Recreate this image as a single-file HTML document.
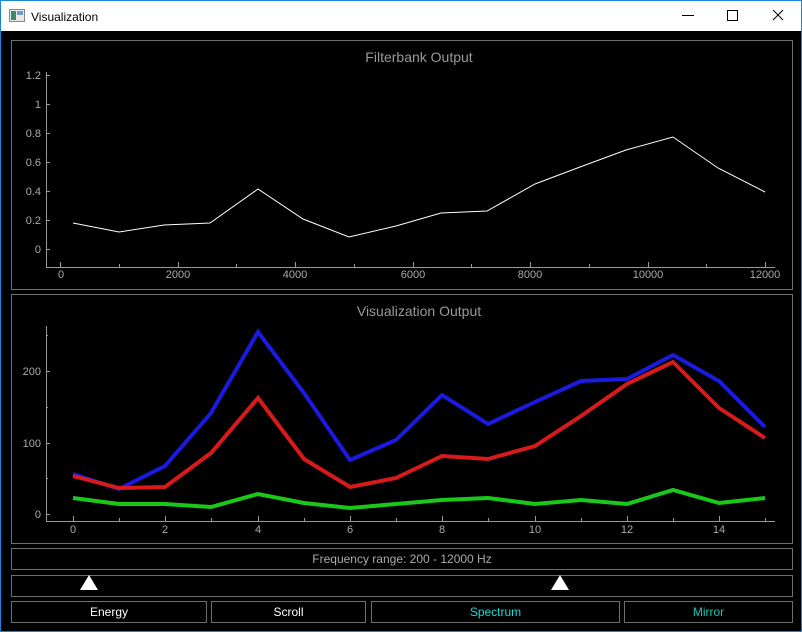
<!DOCTYPE html>
<html><head><style>
body{margin:0;width:802px;height:632px;overflow:hidden;background:#000;font-family:"Liberation Sans",sans-serif;}
#win{position:absolute;left:0;top:0;width:800px;height:630px;border:1px solid #1883d7;background:#000;}
#title{position:absolute;left:0;top:0;width:800px;height:30px;background:#fff;}
.box{position:absolute;border:1px solid #6e6e6e;box-sizing:border-box;color:#aaa;font-size:12px;text-align:center;}
</style></head><body>
<div id="win">
<div id="title">
<svg width="800" height="30" style="position:absolute;left:0;top:0">
<rect x="8.5" y="8.5" width="15" height="12" fill="#e8e8e8" stroke="#888"/>
<rect x="10" y="10" width="5" height="9" fill="#3a8a6a"/>
<rect x="16" y="10" width="6" height="4" fill="#6a9ad0"/>
<text x="30" y="20" font-family="Liberation Sans" font-size="12" fill="#000">Visualization</text>
<line x1="681" y1="14.5" x2="693" y2="14.5" stroke="#000"/>
<rect x="726.5" y="9.5" width="10" height="10" fill="none" stroke="#000"/>
<path d="M772 9 L782 19 M782 9 L772 19" stroke="#000"/>
</svg>
</div>
<div class="box" style="left:10px;top:39px;width:782px;height:250px"></div>
<div class="box" style="left:10px;top:293px;width:782px;height:250px"></div>
<svg width="802" height="632" style="position:absolute;left:-1px;top:-1px" font-family="Liberation Sans" font-size="11" fill="#aaa">
<text x="419" y="62" font-size="14" text-anchor="middle" fill="#999">Filterbank Output</text>
<g stroke="#999" fill="none">
<path d="M46.5 72 V267.5 H775"/>
<path d="M46 75.5h4M46 104.5h4M46 133.5h4M46 162.5h4M46 191.5h4M46 220.5h4M46 249.5h4"/>
<path d="M60.5 267v-5M119.5 267v-3M178.5 267v-5M236.5 267v-3M295.5 267v-5M354.5 267v-3M413.5 267v-5M471.5 267v-3M530.5 267v-5M589.5 267v-3M648.5 267v-5M706.5 267v-3M765.5 267v-5"/>
</g>
<g text-anchor="end"><text x="41" y="79">1.2</text><text x="41" y="108">1</text><text x="41" y="137">0.8</text><text x="41" y="166">0.6</text><text x="41" y="195">0.4</text><text x="41" y="224">0.2</text><text x="41" y="253">0</text></g>
<g text-anchor="middle"><text x="61" y="278">0</text><text x="178" y="278">2000</text><text x="295" y="278">4000</text><text x="413" y="278">6000</text><text x="530" y="278">8000</text><text x="648" y="278">10000</text><text x="765" y="278">12000</text></g>
<polyline fill="none" stroke="#fff" stroke-width="1" points="73,223 119,232 164,225 210,223 258,189 303,219 349,237 396,226 441,213 487,211 535,184 580,167 626,150 673,137 718,168 765,192"/>

<text x="419" y="316" font-size="14" text-anchor="middle" fill="#999">Visualization Output</text>
<g stroke="#999" fill="none">
<path d="M46.5 326 V521.5 H775"/>
<path d="M46 514.5h4M46 478.5h2M46 443.5h4M46 407.5h2M46 371.5h4M46 335.5h2"/>
<path d="M73.5 521v-5M119.5 521v-3M165.5 521v-5M211.5 521v-3M258.5 521v-5M304.5 521v-3M350.5 521v-5M396.5 521v-3M442.5 521v-5M488.5 521v-3M535.5 521v-5M581.5 521v-3M627.5 521v-5M673.5 521v-3M719.5 521v-5M765.5 521v-3"/>
</g>
<g text-anchor="end"><text x="41" y="375">200</text><text x="41" y="447">100</text><text x="41" y="518">0</text></g>
<g text-anchor="middle"><text x="73" y="533">0</text><text x="165" y="533">2</text><text x="258" y="533">4</text><text x="350" y="533">6</text><text x="442" y="533">8</text><text x="535" y="533">10</text><text x="627" y="533">12</text><text x="719" y="533">14</text></g>
<g fill="none" stroke-width="4" stroke-linejoin="miter">
<polyline stroke="#1a1ae0" points="73,474 119,489 165,466 211,413 258,332 304,393 350,460 396,440 442,395 488,424 535,402 581,381 627,379 673,355 719,381 765,427"/>
<polyline stroke="#d81a1a" points="73,476 119,488 165,487 211,453 258,398 304,459 350,487 396,478 442,456 488,459 535,446 581,416 627,384 673,362 719,408 765,438"/>
<polyline stroke="#1ac81a" points="73,498 119,504 165,504 211,507 258,494 304,503 350,508 396,504 442,500 488,498 535,504 581,500 627,504 673,490 719,503 765,498"/>
</g>
</svg>
<div class="box" style="left:10px;top:547px;width:782px;height:22px;line-height:20px">Frequency range: 200 - 12000 Hz</div>
<div class="box" style="left:10px;top:574px;width:782px;height:22px"></div>
<svg width="802" height="632" style="position:absolute;left:-1px;top:-1px">
<polygon points="89,575 98,590 80,590" fill="#fff"/>
<polygon points="560,575 569,590 551,590" fill="#fff"/>
</svg>
<div class="box" style="left:10px;top:600px;width:196px;height:22px;line-height:20px;color:#fff">Energy</div>
<div class="box" style="left:210px;top:600px;width:155px;height:22px;line-height:20px;color:#fff">Scroll</div>
<div class="box" style="left:370px;top:600px;width:249px;height:22px;line-height:20px;color:#1ad8d8">Spectrum</div>
<div class="box" style="left:623px;top:600px;width:169px;height:22px;line-height:20px;color:#1ac8b4">Mirror</div>
</div>
</body></html>
